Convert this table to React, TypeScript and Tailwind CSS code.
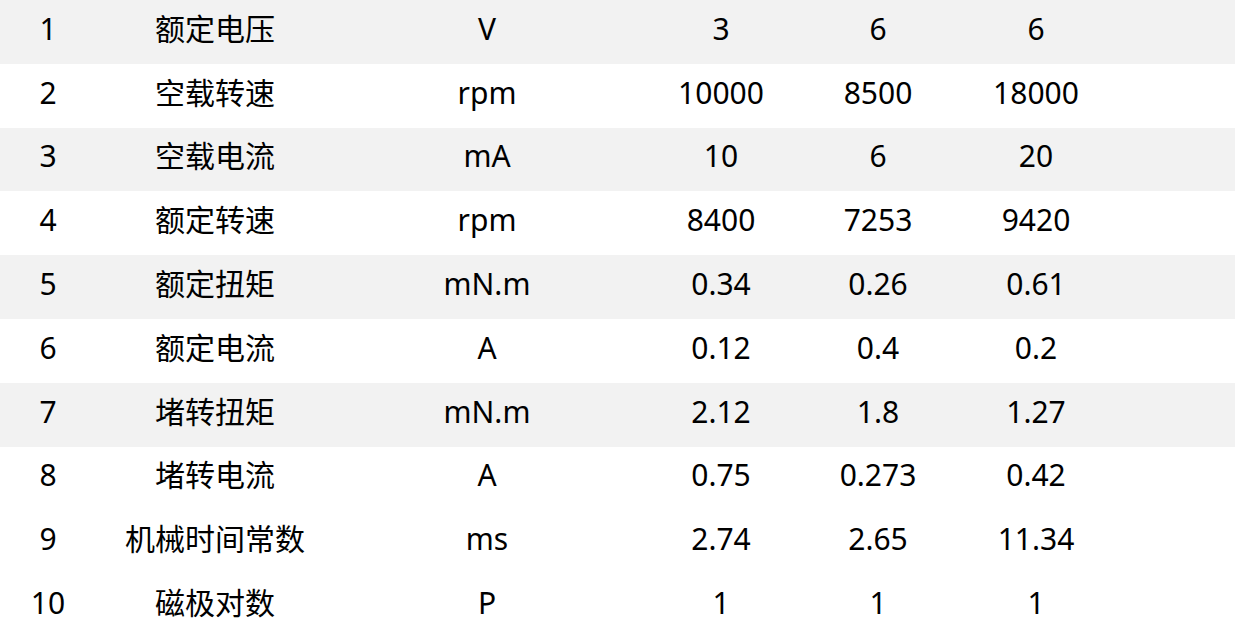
const rows = [
    ["1", "额定电压", "V", "3", "6", "6"],
    ["2", "空载转速", "rpm", "10000", "8500", "18000"],
    ["3", "空载电流", "mA", "10", "6", "20"],
    ["4", "额定转速", "rpm", "8400", "7253", "9420"],
    ["5", "额定扭矩", "mN.m", "0.34", "0.26", "0.61"],
    ["6", "额定电流", "A", "0.12", "0.4", "0.2"],
    ["7", "堵转扭矩", "mN.m", "2.12", "1.8", "1.27"],
    ["8", "堵转电流", "A", "0.75", "0.273", "0.42"],
    ["9", "机械时间常数", "ms", "2.74", "2.65", "11.34"],
    ["10", "磁极对数", "P", "1", "1", "1"],
];

export default function App() {
    return (
        <div
            className="w-[1235px] h-[638px] flex flex-col bg-white text-[30px] text-black"
            style={{ fontFamily: '"Noto Sans", "Noto Sans CJK SC", sans-serif' }}
        >
            {rows.map((row, i) => (
                <div
                    key={row[0]}
                    className={`flex-1 grid grid-cols-[96px_238px_306px_162px_152px_164px_1fr] items-center pb-[6px] ${
                        i % 2 === 0 && i < 7 ? "bg-[#f2f2f2]" : "bg-white"
                    }`}
                >
                    {row.map((cell, j) => (
                        <div key={j} className="text-center leading-none whitespace-nowrap">
                            {cell}
                        </div>
                    ))}
                    <div />
                </div>
            ))}
        </div>
    );
}
